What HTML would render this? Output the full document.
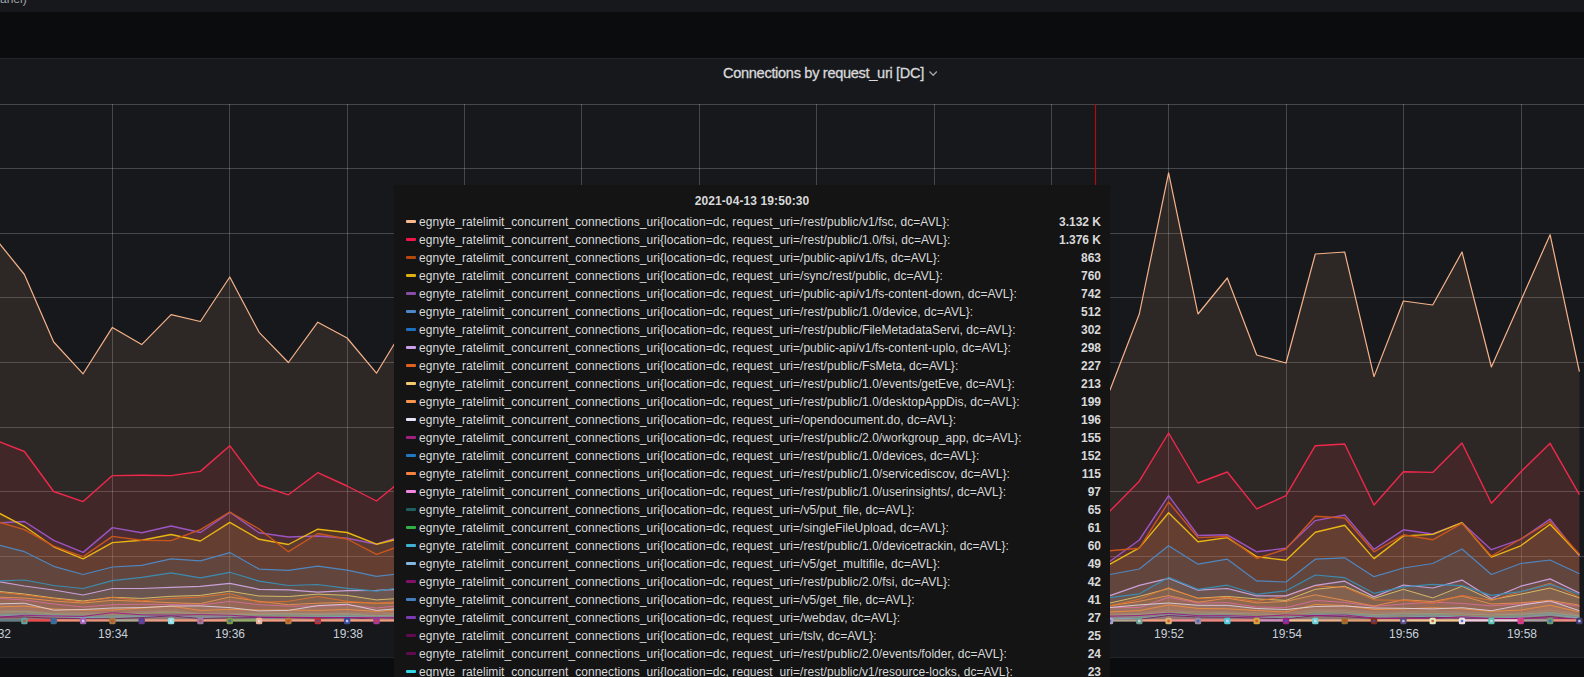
<!DOCTYPE html>
<html><head><meta charset="utf-8"><style>
*{margin:0;padding:0;box-sizing:border-box}
html,body{width:1584px;height:677px;overflow:hidden;background:#0b0c0e;font-family:"Liberation Sans",sans-serif}
.top{position:absolute;left:0;top:0;width:1584px;height:12px;background:#17181c;overflow:hidden}
.top span{position:absolute;left:0px;top:-8px;font-size:12px;color:#9fa3a8}
.panel{position:absolute;left:0;top:58px;width:1584px;height:600px;background:#17181c;border-top:1px solid #222428;border-bottom:1px solid #222428}
.title{position:absolute;left:0;top:64px;width:1584px;text-align:center;font-size:14px;color:#d8d9da;padding-left:60px}
.title span{position:absolute;left:723px;top:1px}
.chev{position:absolute}
.tip{position:absolute;left:394px;top:185px;width:716px;height:500px;background:#141414;border-radius:3px}
.hd{position:absolute;left:0;top:193px;width:100%;text-align:center;font-weight:bold;font-size:12px;color:#d8d9da}
.r{position:absolute;left:0;height:18px;width:716px;font-size:12px;color:#d8d9da;white-space:nowrap}
.r i{position:absolute;left:12px;top:8px;width:10px;height:3px;border-radius:1px}
.r .l{position:absolute;left:25px;top:3px;letter-spacing:0.05px}
.r b{position:absolute;right:9px;top:3px;font-weight:bold}
</style></head><body>
<div class="top"><span>anel)</span></div>
<div class="panel"></div>
<div class="title" style="padding:0"><span style="position:absolute;left:723px;top:1px;font-size:14.6px;letter-spacing:-0.32px;-webkit-text-stroke:0.3px #d8d9da">Connections by request_uri [DC]</span></div>
<svg class="chev" width="10" height="8" style="left:928px;top:70px"><path d="M1.5 1.5 L5.2 5.3 L8.8 1.5" fill="none" stroke="#9fa3a8" stroke-width="1.3"/></svg>
<svg width="1584" height="677" style="position:absolute;left:0;top:0">
<defs><clipPath id="pc"><rect x="0" y="104" width="1580" height="518"/></clipPath></defs>
<g stroke="#ffffff" stroke-opacity="0.2" stroke-width="1" shape-rendering="crispEdges"><line x1="0" y1="104.5" x2="1584" y2="104.5"/><line x1="0" y1="168.5" x2="1584" y2="168.5"/><line x1="0" y1="233.5" x2="1584" y2="233.5"/><line x1="0" y1="297.5" x2="1584" y2="297.5"/><line x1="0" y1="362.5" x2="1584" y2="362.5"/><line x1="0" y1="427.5" x2="1584" y2="427.5"/><line x1="0" y1="491.5" x2="1584" y2="491.5"/><line x1="0" y1="556.5" x2="1584" y2="556.5"/><line x1="112.5" y1="104" x2="112.5" y2="621"/><line x1="229.5" y1="104" x2="229.5" y2="621"/><line x1="347.5" y1="104" x2="347.5" y2="621"/><line x1="464.5" y1="104" x2="464.5" y2="621"/><line x1="581.5" y1="104" x2="581.5" y2="621"/><line x1="699.5" y1="104" x2="699.5" y2="621"/><line x1="816.5" y1="104" x2="816.5" y2="621"/><line x1="934.5" y1="104" x2="934.5" y2="621"/><line x1="1051.5" y1="104" x2="1051.5" y2="621"/><line x1="1168.5" y1="104" x2="1168.5" y2="621"/><line x1="1286.5" y1="104" x2="1286.5" y2="621"/><line x1="1403.5" y1="104" x2="1403.5" y2="621"/><line x1="1521.5" y1="104" x2="1521.5" y2="621"/></g>
<g clip-path="url(#pc)">
<path d="M-5.0 238.0 L24.4 274.5 L53.7 342.0 L83.1 373.8 L112.4 327.4 L141.7 344.6 L171.1 314.7 L200.4 321.5 L229.8 277.0 L259.1 332.3 L288.4 362.5 L317.8 322.2 L347.1 338.0 L376.5 373.2 L405.8 325.0 L435.1 330.0 L435.1 621.2 L-5.0 621.2 Z" fill="#F4BA74" fill-opacity="0.1" stroke="none"/>
<path d="M1080.6 410.0 L1110.0 390.0 L1139.3 314.0 L1168.6 172.9 L1198.0 314.0 L1227.3 278.0 L1256.7 355.0 L1286.0 363.0 L1315.3 254.0 L1344.7 252.0 L1374.0 376.6 L1403.4 301.0 L1432.7 305.0 L1462.0 252.0 L1491.4 367.0 L1520.7 301.0 L1550.1 234.7 L1579.4 371.6 L1579.4 621.2 L1080.6 621.2 Z" fill="#F4BA74" fill-opacity="0.1" stroke="none"/>
<path d="M-5.0 440.0 L24.4 451.5 L53.7 491.5 L83.1 501.6 L112.4 475.6 L141.7 475.3 L171.1 475.6 L200.4 471.4 L229.8 445.7 L259.1 485.0 L288.4 494.8 L317.8 472.7 L347.1 486.0 L376.5 501.0 L405.8 477.0 L435.1 480.0 L435.1 621.2 L-5.0 621.2 Z" fill="#FF2C52" fill-opacity="0.1" stroke="none"/>
<path d="M1080.6 520.0 L1110.0 511.0 L1139.3 481.2 L1168.6 433.0 L1198.0 483.0 L1227.3 472.0 L1256.7 508.9 L1286.0 495.7 L1315.3 445.7 L1344.7 444.0 L1374.0 505.0 L1403.4 471.7 L1432.7 472.4 L1462.0 443.0 L1491.4 503.2 L1520.7 472.0 L1550.1 443.3 L1579.4 494.7 L1579.4 621.2 L1080.6 621.2 Z" fill="#FF2C52" fill-opacity="0.1" stroke="none"/>
<path d="M-5.0 521.0 L24.4 529.6 L53.7 546.2 L83.1 556.6 L112.4 536.4 L141.7 540.3 L171.1 540.6 L200.4 529.6 L229.8 512.0 L259.1 529.0 L288.4 551.7 L317.8 533.5 L347.1 539.0 L376.5 554.3 L405.8 544.0 L435.1 545.0 L435.1 621.2 L-5.0 621.2 Z" fill="#C8561C" fill-opacity="0.1" stroke="none"/>
<path d="M1080.6 552.0 L1110.0 550.7 L1139.3 548.2 L1168.6 502.0 L1198.0 537.6 L1227.3 536.5 L1256.7 558.5 L1286.0 549.0 L1315.3 516.3 L1344.7 518.0 L1374.0 551.8 L1403.4 534.8 L1432.7 539.8 L1462.0 523.4 L1491.4 556.0 L1520.7 539.0 L1550.1 521.7 L1579.4 554.3 L1579.4 621.2 L1080.6 621.2 Z" fill="#C8561C" fill-opacity="0.1" stroke="none"/>
<path d="M-5.0 511.0 L24.4 526.3 L53.7 546.8 L83.1 558.9 L112.4 542.6 L141.7 540.3 L171.1 534.5 L200.4 541.0 L229.8 522.4 L259.1 539.3 L288.4 544.5 L317.8 529.2 L347.1 532.5 L376.5 544.2 L405.8 537.0 L435.1 540.0 L435.1 621.2 L-5.0 621.2 Z" fill="#E8C412" fill-opacity="0.1" stroke="none"/>
<path d="M1080.6 566.0 L1110.0 564.2 L1139.3 547.9 L1168.6 512.8 L1198.0 541.8 L1227.3 537.6 L1256.7 556.7 L1286.0 560.3 L1315.3 532.3 L1344.7 525.2 L1374.0 558.6 L1403.4 535.9 L1432.7 534.4 L1462.0 522.7 L1491.4 557.1 L1520.7 545.8 L1550.1 524.2 L1579.4 555.0 L1579.4 621.2 L1080.6 621.2 Z" fill="#E8C412" fill-opacity="0.1" stroke="none"/>
<path d="M-5.0 523.0 L24.4 521.5 L53.7 540.3 L83.1 552.4 L112.4 527.6 L141.7 532.8 L171.1 526.0 L200.4 532.5 L229.8 512.3 L259.1 532.8 L288.4 537.0 L317.8 536.0 L347.1 538.3 L376.5 544.2 L405.8 535.0 L435.1 536.0 L435.1 621.2 L-5.0 621.2 Z" fill="#9A5A90" fill-opacity="0.1" stroke="none"/>
<path d="M1080.6 565.0 L1110.0 561.3 L1139.3 540.0 L1168.6 495.7 L1198.0 535.5 L1227.3 534.8 L1256.7 551.8 L1286.0 548.2 L1315.3 520.6 L1344.7 515.0 L1374.0 549.3 L1403.4 529.8 L1432.7 534.0 L1462.0 522.7 L1491.4 549.7 L1520.7 539.4 L1550.1 519.2 L1579.4 556.0 L1579.4 621.2 L1080.6 621.2 Z" fill="#9A5A90" fill-opacity="0.1" stroke="none"/>
<path d="M-5.0 544.0 L24.4 551.7 L53.7 566.3 L83.1 574.5 L112.4 567.0 L141.7 565.4 L171.1 558.9 L200.4 560.8 L229.8 552.6 L259.1 569.1 L288.4 570.4 L317.8 566.2 L347.1 570.1 L376.5 576.3 L405.8 573.0 L435.1 574.0 L435.1 621.2 L-5.0 621.2 Z" fill="#5A8AAF" fill-opacity="0.1" stroke="none"/>
<path d="M1080.6 576.0 L1110.0 574.5 L1139.3 569.0 L1168.6 545.7 L1198.0 564.2 L1227.3 559.2 L1256.7 580.9 L1286.0 582.0 L1315.3 559.2 L1344.7 557.8 L1374.0 576.7 L1403.4 568.0 L1432.7 563.5 L1462.0 549.0 L1491.4 574.5 L1520.7 563.5 L1550.1 560.0 L1579.4 573.8 L1579.4 621.2 L1080.6 621.2 Z" fill="#5A8AAF" fill-opacity="0.1" stroke="none"/>
<path d="M-5.0 581.0 L24.4 580.0 L53.7 585.5 L83.1 588.5 L112.4 580.7 L141.7 577.3 L171.1 572.8 L200.4 577.8 L229.8 572.3 L259.1 581.1 L288.4 585.5 L317.8 584.5 L347.1 588.3 L376.5 591.2 L405.8 587.0 L435.1 588.0 L435.1 621.2 L-5.0 621.2 Z" fill="#4A9098" fill-opacity="0.1" stroke="none"/>
<path d="M1080.6 598.0 L1110.0 597.6 L1139.3 593.8 L1168.6 577.4 L1198.0 589.4 L1227.3 585.2 L1256.7 594.3 L1286.0 590.8 L1315.3 575.0 L1344.7 577.7 L1374.0 593.3 L1403.4 586.8 L1432.7 584.4 L1462.0 585.6 L1491.4 595.4 L1520.7 591.7 L1550.1 584.4 L1579.4 594.2 L1579.4 621.2 L1080.6 621.2 Z" fill="#4A9098" fill-opacity="0.1" stroke="none"/>
<path d="M-5.0 581.0 L24.4 586.0 L53.7 590.0 L83.1 595.0 L112.4 588.5 L141.7 588.5 L171.1 587.4 L200.4 586.4 L229.8 583.3 L259.1 589.3 L288.4 589.8 L317.8 592.2 L347.1 590.7 L376.5 590.3 L405.8 589.0 L435.1 589.0 L435.1 621.2 L-5.0 621.2 Z" fill="#C8A8B8" fill-opacity="0.1" stroke="none"/>
<path d="M1080.6 597.0 L1110.0 595.6 L1139.3 585.4 L1168.6 578.3 L1198.0 590.2 L1227.3 588.5 L1256.7 595.9 L1286.0 595.9 L1315.3 585.3 L1344.7 581.2 L1374.0 596.9 L1403.4 585.0 L1432.7 588.0 L1462.0 580.1 L1491.4 598.5 L1520.7 586.2 L1550.1 578.9 L1579.4 593.0 L1579.4 621.2 L1080.6 621.2 Z" fill="#C8A8B8" fill-opacity="0.1" stroke="none"/>
<path d="M-5.0 592.0 L24.4 595.0 L53.7 598.7 L83.1 602.0 L112.4 597.3 L141.7 600.8 L171.1 598.4 L200.4 597.0 L229.8 593.6 L259.1 602.3 L288.4 601.3 L317.8 596.5 L347.1 601.3 L376.5 603.2 L405.8 601.0 L435.1 601.0 L435.1 621.2 L-5.0 621.2 Z" fill="#E8702A" fill-opacity="0.1" stroke="none"/>
<path d="M1080.6 607.0 L1110.0 605.7 L1139.3 599.1 L1168.6 587.6 L1198.0 598.7 L1227.3 597.3 L1256.7 601.4 L1286.0 595.9 L1315.3 585.8 L1344.7 587.3 L1374.0 599.9 L1403.4 600.3 L1432.7 603.4 L1462.0 595.4 L1491.4 600.3 L1520.7 591.7 L1550.1 583.2 L1579.4 597.3 L1579.4 621.2 L1080.6 621.2 Z" fill="#E8702A" fill-opacity="0.1" stroke="none"/>
<path d="M-5.0 591.0 L24.4 594.0 L53.7 598.0 L83.1 601.0 L112.4 597.3 L141.7 598.4 L171.1 596.3 L200.4 595.4 L229.8 591.2 L259.1 596.0 L288.4 596.5 L317.8 594.1 L347.1 595.4 L376.5 599.9 L405.8 598.0 L435.1 598.0 L435.1 621.2 L-5.0 621.2 Z" fill="#E8C86A" fill-opacity="0.1" stroke="none"/>
<path d="M1080.6 605.0 L1110.0 603.0 L1139.3 596.4 L1168.6 588.5 L1198.0 598.2 L1227.3 596.4 L1256.7 598.9 L1286.0 600.4 L1315.3 589.3 L1344.7 586.3 L1374.0 598.4 L1403.4 589.3 L1432.7 597.9 L1462.0 586.2 L1491.4 599.7 L1520.7 594.2 L1550.1 588.0 L1579.4 597.9 L1579.4 621.2 L1080.6 621.2 Z" fill="#E8C86A" fill-opacity="0.1" stroke="none"/>
<path d="M-5.0 597.0 L24.4 598.0 L53.7 601.0 L83.1 603.0 L112.4 600.3 L141.7 601.3 L171.1 602.7 L200.4 603.7 L229.8 597.0 L259.1 601.3 L288.4 604.7 L317.8 603.2 L347.1 602.3 L376.5 603.2 L405.8 603.0 L435.1 603.0 L435.1 621.2 L-5.0 621.2 Z" fill="#F29050" fill-opacity="0.1" stroke="none"/>
<path d="M1080.6 606.0 L1110.0 605.7 L1139.3 601.3 L1168.6 595.6 L1198.0 602.2 L1227.3 598.2 L1256.7 602.9 L1286.0 601.4 L1315.3 594.8 L1344.7 600.4 L1374.0 606.0 L1403.4 599.7 L1432.7 601.5 L1462.0 596.0 L1491.4 604.0 L1520.7 602.8 L1550.1 600.3 L1579.4 605.2 L1579.4 621.2 L1080.6 621.2 Z" fill="#F29050" fill-opacity="0.1" stroke="none"/>
<path d="M-5.0 604.0 L24.4 603.2 L53.7 610.2 L83.1 609.5 L112.4 608.0 L141.7 607.6 L171.1 606.1 L200.4 605.9 L229.8 607.6 L259.1 610.9 L288.4 610.4 L317.8 605.6 L347.1 604.2 L376.5 610.4 L405.8 608.0 L435.1 608.0 L435.1 621.2 L-5.0 621.2 Z" fill="#E0D8E8" fill-opacity="0.1" stroke="none"/>
<path d="M1080.6 608.0 L1110.0 607.5 L1139.3 604.9 L1168.6 603.0 L1198.0 605.3 L1227.3 605.3 L1256.7 608.5 L1286.0 609.5 L1315.3 606.5 L1344.7 606.0 L1374.0 608.0 L1403.4 608.3 L1432.7 608.9 L1462.0 607.7 L1491.4 610.7 L1520.7 605.2 L1550.1 600.9 L1579.4 610.7 L1579.4 621.2 L1080.6 621.2 Z" fill="#E0D8E8" fill-opacity="0.1" stroke="none"/>
<path d="M-5.0 598.0 L24.4 600.0 L53.7 604.0 L83.1 607.0 L112.4 604.7 L141.7 604.2 L171.1 604.5 L200.4 605.1 L229.8 601.3 L259.1 604.7 L288.4 606.1 L317.8 606.1 L347.1 605.1 L376.5 608.0 L405.8 605.0 L435.1 605.0 L435.1 621.2 L-5.0 621.2 Z" fill="#D86FA0" fill-opacity="0.1" stroke="none"/>
<path d="M1080.6 608.0 L1110.0 607.5 L1139.3 607.5 L1168.6 597.3 L1198.0 603.0 L1227.3 602.6 L1256.7 607.0 L1286.0 607.5 L1315.3 600.4 L1344.7 602.4 L1374.0 606.5 L1403.4 604.0 L1432.7 602.2 L1462.0 603.4 L1491.4 605.8 L1520.7 604.0 L1550.1 601.5 L1579.4 606.4 L1579.4 621.2 L1080.6 621.2 Z" fill="#D86FA0" fill-opacity="0.1" stroke="none"/>
<path d="M-5.0 607.0 L24.4 606.0 L53.7 609.0 L83.1 610.0 L112.4 610.0 L141.7 608.0 L171.1 606.1 L200.4 610.4 L229.8 609.5 L259.1 610.0 L288.4 610.0 L317.8 610.4 L347.1 609.5 L376.5 611.4 L405.8 609.5 L435.1 610.0 L435.1 621.2 L-5.0 621.2 Z" fill="#F09040" fill-opacity="0.1" stroke="none"/>
<path d="M1080.6 612.0 L1110.0 612.0 L1139.3 610.6 L1168.6 604.9 L1198.0 608.4 L1227.3 608.8 L1256.7 610.5 L1286.0 612.0 L1315.3 604.4 L1344.7 605.5 L1374.0 609.5 L1403.4 608.9 L1432.7 607.7 L1462.0 608.9 L1491.4 611.3 L1520.7 610.1 L1550.1 605.2 L1579.4 612.0 L1579.4 621.2 L1080.6 621.2 Z" fill="#F09040" fill-opacity="0.1" stroke="none"/>
<path d="M-5.0 617.5 L24.4 615.3 L53.7 616.0 L83.1 616.4 L112.4 612.7 L141.7 614.8 L171.1 615.2 L200.4 614.6 L229.8 615.2 L259.1 617.0 L288.4 617.5 L317.8 617.6 L347.1 617.5 L376.5 617.6 L405.8 617.5 L435.1 617.5 L435.1 621.2 L-5.0 621.2 Z" fill="#A0107F" fill-opacity="0.1" stroke="none"/>
<path d="M1080.6 616.5 L1110.0 616.2 L1139.3 615.5 L1168.6 613.3 L1198.0 615.7 L1227.3 615.7 L1256.7 616.6 L1286.0 615.0 L1315.3 615.6 L1344.7 615.0 L1374.0 618.0 L1403.4 618.7 L1432.7 618.7 L1462.0 616.8 L1491.4 618.7 L1520.7 618.3 L1550.1 618.0 L1579.4 619.3 L1579.4 621.2 L1080.6 621.2 Z" fill="#A0107F" fill-opacity="0.1" stroke="none"/>
<path d="M-5.0 611.0 L24.4 610.2 L53.7 612.5 L83.1 612.1 L112.4 612.8 L141.7 611.5 L171.1 610.1 L200.4 613.0 L229.8 611.8 L259.1 612.6 L288.4 612.1 L317.8 612.3 L347.1 612.4 L376.5 614.0 L405.8 611.9 L435.1 612.3 L435.1 621.2 L-5.0 621.2 Z" fill="#A08070" fill-opacity="0.1" stroke="none"/>
<path d="M1080.6 614.0 L1110.0 614.5 L1139.3 613.2 L1168.6 610.0 L1198.0 612.7 L1227.3 611.4 L1256.7 613.6 L1286.0 613.4 L1315.3 609.4 L1344.7 609.9 L1374.0 612.2 L1403.4 612.7 L1432.7 611.1 L1462.0 612.3 L1491.4 613.6 L1520.7 612.6 L1550.1 610.4 L1579.4 613.1 L1579.4 621.2 L1080.6 621.2 Z" fill="#A08070" fill-opacity="0.1" stroke="none"/>
<path d="M-5.0 612.0 L24.4 611.8 L53.7 614.0 L83.1 614.1 L112.4 614.0 L141.7 613.4 L171.1 612.2 L200.4 614.1 L229.8 614.5 L259.1 614.6 L288.4 613.8 L317.8 614.6 L347.1 614.0 L376.5 615.6 L405.8 614.4 L435.1 613.9 L435.1 621.2 L-5.0 621.2 Z" fill="#9AA080" fill-opacity="0.1" stroke="none"/>
<path d="M1080.6 616.0 L1110.0 614.6 L1139.3 614.4 L1168.6 612.1 L1198.0 612.9 L1227.3 613.6 L1256.7 613.8 L1286.0 615.5 L1315.3 611.9 L1344.7 612.1 L1374.0 614.6 L1403.4 613.4 L1432.7 613.4 L1462.0 613.9 L1491.4 615.0 L1520.7 614.2 L1550.1 612.4 L1579.4 616.0 L1579.4 621.2 L1080.6 621.2 Z" fill="#9AA080" fill-opacity="0.1" stroke="none"/>
<path d="M-5.0 614.2 L24.4 614.0 L53.7 614.5 L83.1 616.1 L112.4 616.0 L141.7 615.5 L171.1 614.3 L200.4 615.6 L229.8 615.3 L259.1 616.0 L288.4 615.0 L317.8 615.9 L347.1 615.0 L376.5 615.8 L405.8 614.8 L435.1 616.2 L435.1 621.2 L-5.0 621.2 Z" fill="#7A9A8A" fill-opacity="0.1" stroke="none"/>
<path d="M1080.6 616.2 L1110.0 616.3 L1139.3 615.9 L1168.6 613.8 L1198.0 614.3 L1227.3 615.1 L1256.7 616.1 L1286.0 617.4 L1315.3 613.5 L1344.7 614.1 L1374.0 615.1 L1403.4 615.1 L1432.7 614.4 L1462.0 615.8 L1491.4 617.1 L1520.7 615.2 L1550.1 612.8 L1579.4 616.3 L1579.4 621.2 L1080.6 621.2 Z" fill="#7A9A8A" fill-opacity="0.1" stroke="none"/>
<path d="M-5.0 611.3 L24.4 611.2 L53.7 612.9 L83.1 612.9 L112.4 612.5 L141.7 612.1 L171.1 611.1 L200.4 613.6 L229.8 613.7 L259.1 613.6 L288.4 613.3 L317.8 613.6 L347.1 613.3 L376.5 613.2 L405.8 613.6 L435.1 613.7 L435.1 621.2 L-5.0 621.2 Z" fill="#B08878" fill-opacity="0.1" stroke="none"/>
<path d="M1080.6 614.8 L1110.0 614.7 L1139.3 613.4 L1168.6 610.5 L1198.0 611.8 L1227.3 612.9 L1256.7 612.8 L1286.0 613.6 L1315.3 610.0 L1344.7 610.5 L1374.0 612.7 L1403.4 612.0 L1432.7 611.3 L1462.0 612.1 L1491.4 613.3 L1520.7 613.1 L1550.1 610.1 L1579.4 614.8 L1579.4 621.2 L1080.6 621.2 Z" fill="#B08878" fill-opacity="0.1" stroke="none"/>
<path d="M-5.0 614.9 L24.4 613.7 L53.7 615.4 L83.1 616.0 L112.4 616.0 L141.7 614.6 L171.1 614.9 L200.4 617.2 L229.8 615.9 L259.1 616.2 L288.4 615.6 L317.8 615.8 L347.1 615.7 L376.5 616.6 L405.8 616.5 L435.1 615.7 L435.1 621.2 L-5.0 621.2 Z" fill="#8A8A9A" fill-opacity="0.1" stroke="none"/>
<path d="M1080.6 616.5 L1110.0 618.0 L1139.3 616.6 L1168.6 613.1 L1198.0 615.5 L1227.3 614.9 L1256.7 616.5 L1286.0 618.0 L1315.3 614.0 L1344.7 614.3 L1374.0 615.6 L1403.4 615.5 L1432.7 614.6 L1462.0 616.1 L1491.4 617.0 L1520.7 616.7 L1550.1 613.6 L1579.4 616.8 L1579.4 621.2 L1080.6 621.2 Z" fill="#8A8A9A" fill-opacity="0.1" stroke="none"/>
<path d="M-5.0 617.2 L24.4 617.0 L53.7 618.3 L83.1 618.7 L112.4 618.8 L141.7 617.6 L171.1 615.9 L200.4 618.5 L229.8 617.8 L259.1 617.5 L288.4 617.5 L317.8 618.1 L347.1 617.6 L376.5 619.3 L405.8 618.7 L435.1 618.2 L435.1 621.2 L-5.0 621.2 Z" fill="#6D1F62" fill-opacity="0.1" stroke="none"/>
<path d="M1080.6 619.9 L1110.0 620.0 L1139.3 619.3 L1168.6 615.5 L1198.0 617.0 L1227.3 617.2 L1256.7 618.0 L1286.0 618.8 L1315.3 615.6 L1344.7 616.6 L1374.0 618.5 L1403.4 617.7 L1432.7 617.3 L1462.0 618.2 L1491.4 618.2 L1520.7 618.6 L1550.1 616.5 L1579.4 619.7 L1579.4 621.2 L1080.6 621.2 Z" fill="#6D1F62" fill-opacity="0.1" stroke="none"/>
<path d="M-5.0 616.2 L24.4 615.2 L53.7 616.2 L83.1 617.7 L112.4 617.0 L141.7 616.7 L171.1 616.1 L200.4 617.3 L229.8 616.8 L259.1 618.0 L288.4 617.6 L317.8 616.9 L347.1 616.4 L376.5 617.4 L405.8 617.6 L435.1 617.7 L435.1 621.2 L-5.0 621.2 Z" fill="#70B0C0" fill-opacity="0.1" stroke="none"/>
<path d="M1080.6 617.7 L1110.0 618.8 L1139.3 618.3 L1168.6 615.0 L1198.0 616.2 L1227.3 616.7 L1256.7 616.9 L1286.0 617.5 L1315.3 615.2 L1344.7 615.2 L1374.0 617.0 L1403.4 617.4 L1432.7 616.0 L1462.0 617.3 L1491.4 618.4 L1520.7 616.8 L1550.1 614.5 L1579.4 617.9 L1579.4 621.2 L1080.6 621.2 Z" fill="#70B0C0" fill-opacity="0.1" stroke="none"/>
<path d="M-5.0 616.2 L24.4 615.2 L53.7 616.2 L83.1 617.7 L112.4 617.0 L141.7 616.7 L171.1 616.1 L200.4 617.3 L229.8 616.8 L259.1 618.0 L288.4 617.6 L317.8 616.9 L347.1 616.4 L376.5 617.4 L405.8 617.6 L435.1 617.7" fill="none" stroke="#70B0C0" stroke-width="1.0" stroke-opacity="0.85" stroke-linejoin="round"/>
<path d="M1080.6 617.7 L1110.0 618.8 L1139.3 618.3 L1168.6 615.0 L1198.0 616.2 L1227.3 616.7 L1256.7 616.9 L1286.0 617.5 L1315.3 615.2 L1344.7 615.2 L1374.0 617.0 L1403.4 617.4 L1432.7 616.0 L1462.0 617.3 L1491.4 618.4 L1520.7 616.8 L1550.1 614.5 L1579.4 617.9" fill="none" stroke="#70B0C0" stroke-width="1.0" stroke-opacity="0.85" stroke-linejoin="round"/>
<path d="M-5.0 617.2 L24.4 617.0 L53.7 618.3 L83.1 618.7 L112.4 618.8 L141.7 617.6 L171.1 615.9 L200.4 618.5 L229.8 617.8 L259.1 617.5 L288.4 617.5 L317.8 618.1 L347.1 617.6 L376.5 619.3 L405.8 618.7 L435.1 618.2" fill="none" stroke="#6D1F62" stroke-width="1.0" stroke-opacity="0.85" stroke-linejoin="round"/>
<path d="M1080.6 619.9 L1110.0 620.0 L1139.3 619.3 L1168.6 615.5 L1198.0 617.0 L1227.3 617.2 L1256.7 618.0 L1286.0 618.8 L1315.3 615.6 L1344.7 616.6 L1374.0 618.5 L1403.4 617.7 L1432.7 617.3 L1462.0 618.2 L1491.4 618.2 L1520.7 618.6 L1550.1 616.5 L1579.4 619.7" fill="none" stroke="#6D1F62" stroke-width="1.0" stroke-opacity="0.85" stroke-linejoin="round"/>
<path d="M-5.0 614.9 L24.4 613.7 L53.7 615.4 L83.1 616.0 L112.4 616.0 L141.7 614.6 L171.1 614.9 L200.4 617.2 L229.8 615.9 L259.1 616.2 L288.4 615.6 L317.8 615.8 L347.1 615.7 L376.5 616.6 L405.8 616.5 L435.1 615.7" fill="none" stroke="#8A8A9A" stroke-width="1.0" stroke-opacity="0.85" stroke-linejoin="round"/>
<path d="M1080.6 616.5 L1110.0 618.0 L1139.3 616.6 L1168.6 613.1 L1198.0 615.5 L1227.3 614.9 L1256.7 616.5 L1286.0 618.0 L1315.3 614.0 L1344.7 614.3 L1374.0 615.6 L1403.4 615.5 L1432.7 614.6 L1462.0 616.1 L1491.4 617.0 L1520.7 616.7 L1550.1 613.6 L1579.4 616.8" fill="none" stroke="#8A8A9A" stroke-width="1.0" stroke-opacity="0.85" stroke-linejoin="round"/>
<path d="M-5.0 611.3 L24.4 611.2 L53.7 612.9 L83.1 612.9 L112.4 612.5 L141.7 612.1 L171.1 611.1 L200.4 613.6 L229.8 613.7 L259.1 613.6 L288.4 613.3 L317.8 613.6 L347.1 613.3 L376.5 613.2 L405.8 613.6 L435.1 613.7" fill="none" stroke="#B08878" stroke-width="1.0" stroke-opacity="0.85" stroke-linejoin="round"/>
<path d="M1080.6 614.8 L1110.0 614.7 L1139.3 613.4 L1168.6 610.5 L1198.0 611.8 L1227.3 612.9 L1256.7 612.8 L1286.0 613.6 L1315.3 610.0 L1344.7 610.5 L1374.0 612.7 L1403.4 612.0 L1432.7 611.3 L1462.0 612.1 L1491.4 613.3 L1520.7 613.1 L1550.1 610.1 L1579.4 614.8" fill="none" stroke="#B08878" stroke-width="1.0" stroke-opacity="0.85" stroke-linejoin="round"/>
<path d="M-5.0 614.2 L24.4 614.0 L53.7 614.5 L83.1 616.1 L112.4 616.0 L141.7 615.5 L171.1 614.3 L200.4 615.6 L229.8 615.3 L259.1 616.0 L288.4 615.0 L317.8 615.9 L347.1 615.0 L376.5 615.8 L405.8 614.8 L435.1 616.2" fill="none" stroke="#7A9A8A" stroke-width="1.0" stroke-opacity="0.85" stroke-linejoin="round"/>
<path d="M1080.6 616.2 L1110.0 616.3 L1139.3 615.9 L1168.6 613.8 L1198.0 614.3 L1227.3 615.1 L1256.7 616.1 L1286.0 617.4 L1315.3 613.5 L1344.7 614.1 L1374.0 615.1 L1403.4 615.1 L1432.7 614.4 L1462.0 615.8 L1491.4 617.1 L1520.7 615.2 L1550.1 612.8 L1579.4 616.3" fill="none" stroke="#7A9A8A" stroke-width="1.0" stroke-opacity="0.85" stroke-linejoin="round"/>
<path d="M-5.0 612.0 L24.4 611.8 L53.7 614.0 L83.1 614.1 L112.4 614.0 L141.7 613.4 L171.1 612.2 L200.4 614.1 L229.8 614.5 L259.1 614.6 L288.4 613.8 L317.8 614.6 L347.1 614.0 L376.5 615.6 L405.8 614.4 L435.1 613.9" fill="none" stroke="#9AA080" stroke-width="1.0" stroke-opacity="0.85" stroke-linejoin="round"/>
<path d="M1080.6 616.0 L1110.0 614.6 L1139.3 614.4 L1168.6 612.1 L1198.0 612.9 L1227.3 613.6 L1256.7 613.8 L1286.0 615.5 L1315.3 611.9 L1344.7 612.1 L1374.0 614.6 L1403.4 613.4 L1432.7 613.4 L1462.0 613.9 L1491.4 615.0 L1520.7 614.2 L1550.1 612.4 L1579.4 616.0" fill="none" stroke="#9AA080" stroke-width="1.0" stroke-opacity="0.85" stroke-linejoin="round"/>
<path d="M-5.0 611.0 L24.4 610.2 L53.7 612.5 L83.1 612.1 L112.4 612.8 L141.7 611.5 L171.1 610.1 L200.4 613.0 L229.8 611.8 L259.1 612.6 L288.4 612.1 L317.8 612.3 L347.1 612.4 L376.5 614.0 L405.8 611.9 L435.1 612.3" fill="none" stroke="#A08070" stroke-width="1.0" stroke-opacity="0.85" stroke-linejoin="round"/>
<path d="M1080.6 614.0 L1110.0 614.5 L1139.3 613.2 L1168.6 610.0 L1198.0 612.7 L1227.3 611.4 L1256.7 613.6 L1286.0 613.4 L1315.3 609.4 L1344.7 609.9 L1374.0 612.2 L1403.4 612.7 L1432.7 611.1 L1462.0 612.3 L1491.4 613.6 L1520.7 612.6 L1550.1 610.4 L1579.4 613.1" fill="none" stroke="#A08070" stroke-width="1.0" stroke-opacity="0.85" stroke-linejoin="round"/>
<path d="M-5.0 617.5 L24.4 615.3 L53.7 616.0 L83.1 616.4 L112.4 612.7 L141.7 614.8 L171.1 615.2 L200.4 614.6 L229.8 615.2 L259.1 617.0 L288.4 617.5 L317.8 617.6 L347.1 617.5 L376.5 617.6 L405.8 617.5 L435.1 617.5" fill="none" stroke="#A0107F" stroke-width="1.0" stroke-opacity="0.85" stroke-linejoin="round"/>
<path d="M1080.6 616.5 L1110.0 616.2 L1139.3 615.5 L1168.6 613.3 L1198.0 615.7 L1227.3 615.7 L1256.7 616.6 L1286.0 615.0 L1315.3 615.6 L1344.7 615.0 L1374.0 618.0 L1403.4 618.7 L1432.7 618.7 L1462.0 616.8 L1491.4 618.7 L1520.7 618.3 L1550.1 618.0 L1579.4 619.3" fill="none" stroke="#A0107F" stroke-width="1.0" stroke-opacity="0.85" stroke-linejoin="round"/>
<path d="M-5.0 607.0 L24.4 606.0 L53.7 609.0 L83.1 610.0 L112.4 610.0 L141.7 608.0 L171.1 606.1 L200.4 610.4 L229.8 609.5 L259.1 610.0 L288.4 610.0 L317.8 610.4 L347.1 609.5 L376.5 611.4 L405.8 609.5 L435.1 610.0" fill="none" stroke="#F09040" stroke-width="1.0" stroke-opacity="0.85" stroke-linejoin="round"/>
<path d="M1080.6 612.0 L1110.0 612.0 L1139.3 610.6 L1168.6 604.9 L1198.0 608.4 L1227.3 608.8 L1256.7 610.5 L1286.0 612.0 L1315.3 604.4 L1344.7 605.5 L1374.0 609.5 L1403.4 608.9 L1432.7 607.7 L1462.0 608.9 L1491.4 611.3 L1520.7 610.1 L1550.1 605.2 L1579.4 612.0" fill="none" stroke="#F09040" stroke-width="1.0" stroke-opacity="0.85" stroke-linejoin="round"/>
<path d="M-5.0 598.0 L24.4 600.0 L53.7 604.0 L83.1 607.0 L112.4 604.7 L141.7 604.2 L171.1 604.5 L200.4 605.1 L229.8 601.3 L259.1 604.7 L288.4 606.1 L317.8 606.1 L347.1 605.1 L376.5 608.0 L405.8 605.0 L435.1 605.0" fill="none" stroke="#D86FA0" stroke-width="1.0" stroke-opacity="0.85" stroke-linejoin="round"/>
<path d="M1080.6 608.0 L1110.0 607.5 L1139.3 607.5 L1168.6 597.3 L1198.0 603.0 L1227.3 602.6 L1256.7 607.0 L1286.0 607.5 L1315.3 600.4 L1344.7 602.4 L1374.0 606.5 L1403.4 604.0 L1432.7 602.2 L1462.0 603.4 L1491.4 605.8 L1520.7 604.0 L1550.1 601.5 L1579.4 606.4" fill="none" stroke="#D86FA0" stroke-width="1.0" stroke-opacity="0.85" stroke-linejoin="round"/>
<path d="M-5.0 604.0 L24.4 603.2 L53.7 610.2 L83.1 609.5 L112.4 608.0 L141.7 607.6 L171.1 606.1 L200.4 605.9 L229.8 607.6 L259.1 610.9 L288.4 610.4 L317.8 605.6 L347.1 604.2 L376.5 610.4 L405.8 608.0 L435.1 608.0" fill="none" stroke="#E0D8E8" stroke-width="1.0" stroke-opacity="0.85" stroke-linejoin="round"/>
<path d="M1080.6 608.0 L1110.0 607.5 L1139.3 604.9 L1168.6 603.0 L1198.0 605.3 L1227.3 605.3 L1256.7 608.5 L1286.0 609.5 L1315.3 606.5 L1344.7 606.0 L1374.0 608.0 L1403.4 608.3 L1432.7 608.9 L1462.0 607.7 L1491.4 610.7 L1520.7 605.2 L1550.1 600.9 L1579.4 610.7" fill="none" stroke="#E0D8E8" stroke-width="1.0" stroke-opacity="0.85" stroke-linejoin="round"/>
<path d="M-5.0 597.0 L24.4 598.0 L53.7 601.0 L83.1 603.0 L112.4 600.3 L141.7 601.3 L171.1 602.7 L200.4 603.7 L229.8 597.0 L259.1 601.3 L288.4 604.7 L317.8 603.2 L347.1 602.3 L376.5 603.2 L405.8 603.0 L435.1 603.0" fill="none" stroke="#F29050" stroke-width="1.0" stroke-opacity="0.85" stroke-linejoin="round"/>
<path d="M1080.6 606.0 L1110.0 605.7 L1139.3 601.3 L1168.6 595.6 L1198.0 602.2 L1227.3 598.2 L1256.7 602.9 L1286.0 601.4 L1315.3 594.8 L1344.7 600.4 L1374.0 606.0 L1403.4 599.7 L1432.7 601.5 L1462.0 596.0 L1491.4 604.0 L1520.7 602.8 L1550.1 600.3 L1579.4 605.2" fill="none" stroke="#F29050" stroke-width="1.0" stroke-opacity="0.85" stroke-linejoin="round"/>
<path d="M-5.0 591.0 L24.4 594.0 L53.7 598.0 L83.1 601.0 L112.4 597.3 L141.7 598.4 L171.1 596.3 L200.4 595.4 L229.8 591.2 L259.1 596.0 L288.4 596.5 L317.8 594.1 L347.1 595.4 L376.5 599.9 L405.8 598.0 L435.1 598.0" fill="none" stroke="#E8C86A" stroke-width="1.0" stroke-opacity="0.85" stroke-linejoin="round"/>
<path d="M1080.6 605.0 L1110.0 603.0 L1139.3 596.4 L1168.6 588.5 L1198.0 598.2 L1227.3 596.4 L1256.7 598.9 L1286.0 600.4 L1315.3 589.3 L1344.7 586.3 L1374.0 598.4 L1403.4 589.3 L1432.7 597.9 L1462.0 586.2 L1491.4 599.7 L1520.7 594.2 L1550.1 588.0 L1579.4 597.9" fill="none" stroke="#E8C86A" stroke-width="1.0" stroke-opacity="0.85" stroke-linejoin="round"/>
<path d="M-5.0 592.0 L24.4 595.0 L53.7 598.7 L83.1 602.0 L112.4 597.3 L141.7 600.8 L171.1 598.4 L200.4 597.0 L229.8 593.6 L259.1 602.3 L288.4 601.3 L317.8 596.5 L347.1 601.3 L376.5 603.2 L405.8 601.0 L435.1 601.0" fill="none" stroke="#E8702A" stroke-width="1.0" stroke-opacity="0.85" stroke-linejoin="round"/>
<path d="M1080.6 607.0 L1110.0 605.7 L1139.3 599.1 L1168.6 587.6 L1198.0 598.7 L1227.3 597.3 L1256.7 601.4 L1286.0 595.9 L1315.3 585.8 L1344.7 587.3 L1374.0 599.9 L1403.4 600.3 L1432.7 603.4 L1462.0 595.4 L1491.4 600.3 L1520.7 591.7 L1550.1 583.2 L1579.4 597.3" fill="none" stroke="#E8702A" stroke-width="1.0" stroke-opacity="0.85" stroke-linejoin="round"/>
<path d="M-5.0 581.0 L24.4 586.0 L53.7 590.0 L83.1 595.0 L112.4 588.5 L141.7 588.5 L171.1 587.4 L200.4 586.4 L229.8 583.3 L259.1 589.3 L288.4 589.8 L317.8 592.2 L347.1 590.7 L376.5 590.3 L405.8 589.0 L435.1 589.0" fill="none" stroke="#C9A0D8" stroke-width="1.2" stroke-opacity="1.00" stroke-linejoin="round"/>
<path d="M1080.6 597.0 L1110.0 595.6 L1139.3 585.4 L1168.6 578.3 L1198.0 590.2 L1227.3 588.5 L1256.7 595.9 L1286.0 595.9 L1315.3 585.3 L1344.7 581.2 L1374.0 596.9 L1403.4 585.0 L1432.7 588.0 L1462.0 580.1 L1491.4 598.5 L1520.7 586.2 L1550.1 578.9 L1579.4 593.0" fill="none" stroke="#C9A0D8" stroke-width="1.2" stroke-opacity="1.00" stroke-linejoin="round"/>
<path d="M-5.0 581.0 L24.4 580.0 L53.7 585.5 L83.1 588.5 L112.4 580.7 L141.7 577.3 L171.1 572.8 L200.4 577.8 L229.8 572.3 L259.1 581.1 L288.4 585.5 L317.8 584.5 L347.1 588.3 L376.5 591.2 L405.8 587.0 L435.1 588.0" fill="none" stroke="#3D8BB0" stroke-width="1.2" stroke-opacity="1.00" stroke-linejoin="round"/>
<path d="M1080.6 598.0 L1110.0 597.6 L1139.3 593.8 L1168.6 577.4 L1198.0 589.4 L1227.3 585.2 L1256.7 594.3 L1286.0 590.8 L1315.3 575.0 L1344.7 577.7 L1374.0 593.3 L1403.4 586.8 L1432.7 584.4 L1462.0 585.6 L1491.4 595.4 L1520.7 591.7 L1550.1 584.4 L1579.4 594.2" fill="none" stroke="#3D8BB0" stroke-width="1.2" stroke-opacity="1.00" stroke-linejoin="round"/>
<path d="M-5.0 544.0 L24.4 551.7 L53.7 566.3 L83.1 574.5 L112.4 567.0 L141.7 565.4 L171.1 558.9 L200.4 560.8 L229.8 552.6 L259.1 569.1 L288.4 570.4 L317.8 566.2 L347.1 570.1 L376.5 576.3 L405.8 573.0 L435.1 574.0" fill="none" stroke="#4F86C0" stroke-width="1.2" stroke-opacity="1.00" stroke-linejoin="round"/>
<path d="M1080.6 576.0 L1110.0 574.5 L1139.3 569.0 L1168.6 545.7 L1198.0 564.2 L1227.3 559.2 L1256.7 580.9 L1286.0 582.0 L1315.3 559.2 L1344.7 557.8 L1374.0 576.7 L1403.4 568.0 L1432.7 563.5 L1462.0 549.0 L1491.4 574.5 L1520.7 563.5 L1550.1 560.0 L1579.4 573.8" fill="none" stroke="#4F86C0" stroke-width="1.2" stroke-opacity="1.00" stroke-linejoin="round"/>
<path d="M-5.0 523.0 L24.4 521.5 L53.7 540.3 L83.1 552.4 L112.4 527.6 L141.7 532.8 L171.1 526.0 L200.4 532.5 L229.8 512.3 L259.1 532.8 L288.4 537.0 L317.8 536.0 L347.1 538.3 L376.5 544.2 L405.8 535.0 L435.1 536.0" fill="none" stroke="#9B55C0" stroke-width="1.4" stroke-opacity="1.00" stroke-linejoin="round"/>
<path d="M1080.6 565.0 L1110.0 561.3 L1139.3 540.0 L1168.6 495.7 L1198.0 535.5 L1227.3 534.8 L1256.7 551.8 L1286.0 548.2 L1315.3 520.6 L1344.7 515.0 L1374.0 549.3 L1403.4 529.8 L1432.7 534.0 L1462.0 522.7 L1491.4 549.7 L1520.7 539.4 L1550.1 519.2 L1579.4 556.0" fill="none" stroke="#9B55C0" stroke-width="1.4" stroke-opacity="1.00" stroke-linejoin="round"/>
<path d="M-5.0 511.0 L24.4 526.3 L53.7 546.8 L83.1 558.9 L112.4 542.6 L141.7 540.3 L171.1 534.5 L200.4 541.0 L229.8 522.4 L259.1 539.3 L288.4 544.5 L317.8 529.2 L347.1 532.5 L376.5 544.2 L405.8 537.0 L435.1 540.0" fill="none" stroke="#E8B512" stroke-width="1.4" stroke-opacity="1.00" stroke-linejoin="round"/>
<path d="M1080.6 566.0 L1110.0 564.2 L1139.3 547.9 L1168.6 512.8 L1198.0 541.8 L1227.3 537.6 L1256.7 556.7 L1286.0 560.3 L1315.3 532.3 L1344.7 525.2 L1374.0 558.6 L1403.4 535.9 L1432.7 534.4 L1462.0 522.7 L1491.4 557.1 L1520.7 545.8 L1550.1 524.2 L1579.4 555.0" fill="none" stroke="#E8B512" stroke-width="1.4" stroke-opacity="1.00" stroke-linejoin="round"/>
<path d="M-5.0 521.0 L24.4 529.6 L53.7 546.2 L83.1 556.6 L112.4 536.4 L141.7 540.3 L171.1 540.6 L200.4 529.6 L229.8 512.0 L259.1 529.0 L288.4 551.7 L317.8 533.5 L347.1 539.0 L376.5 554.3 L405.8 544.0 L435.1 545.0" fill="none" stroke="#C8561C" stroke-width="1.4" stroke-opacity="1.00" stroke-linejoin="round"/>
<path d="M1080.6 552.0 L1110.0 550.7 L1139.3 548.2 L1168.6 502.0 L1198.0 537.6 L1227.3 536.5 L1256.7 558.5 L1286.0 549.0 L1315.3 516.3 L1344.7 518.0 L1374.0 551.8 L1403.4 534.8 L1432.7 539.8 L1462.0 523.4 L1491.4 556.0 L1520.7 539.0 L1550.1 521.7 L1579.4 554.3" fill="none" stroke="#C8561C" stroke-width="1.4" stroke-opacity="1.00" stroke-linejoin="round"/>
<path d="M-5.0 440.0 L24.4 451.5 L53.7 491.5 L83.1 501.6 L112.4 475.6 L141.7 475.3 L171.1 475.6 L200.4 471.4 L229.8 445.7 L259.1 485.0 L288.4 494.8 L317.8 472.7 L347.1 486.0 L376.5 501.0 L405.8 477.0 L435.1 480.0" fill="none" stroke="#F0284C" stroke-width="1.4" stroke-opacity="1.00" stroke-linejoin="round"/>
<path d="M1080.6 520.0 L1110.0 511.0 L1139.3 481.2 L1168.6 433.0 L1198.0 483.0 L1227.3 472.0 L1256.7 508.9 L1286.0 495.7 L1315.3 445.7 L1344.7 444.0 L1374.0 505.0 L1403.4 471.7 L1432.7 472.4 L1462.0 443.0 L1491.4 503.2 L1520.7 472.0 L1550.1 443.3 L1579.4 494.7" fill="none" stroke="#F0284C" stroke-width="1.4" stroke-opacity="1.00" stroke-linejoin="round"/>
<path d="M-5.0 238.0 L24.4 274.5 L53.7 342.0 L83.1 373.8 L112.4 327.4 L141.7 344.6 L171.1 314.7 L200.4 321.5 L229.8 277.0 L259.1 332.3 L288.4 362.5 L317.8 322.2 L347.1 338.0 L376.5 373.2 L405.8 325.0 L435.1 330.0" fill="none" stroke="#F5B28A" stroke-width="1.2" stroke-opacity="1.00" stroke-linejoin="round"/>
<path d="M1080.6 410.0 L1110.0 390.0 L1139.3 314.0 L1168.6 172.9 L1198.0 314.0 L1227.3 278.0 L1256.7 355.0 L1286.0 363.0 L1315.3 254.0 L1344.7 252.0 L1374.0 376.6 L1403.4 301.0 L1432.7 305.0 L1462.0 252.0 L1491.4 367.0 L1520.7 301.0 L1550.1 234.7 L1579.4 371.6" fill="none" stroke="#F5B28A" stroke-width="1.2" stroke-opacity="1.00" stroke-linejoin="round"/>
</g>
<line x1="0.0" y1="620.4" x2="24.4" y2="620.4" stroke="#5A8088" stroke-width="2.2"/>
<line x1="24.4" y1="620.4" x2="53.7" y2="620.4" stroke="#F04848" stroke-width="2.2"/>
<line x1="53.7" y1="620.4" x2="83.1" y2="620.4" stroke="#F09070" stroke-width="2.2"/>
<line x1="83.1" y1="620.4" x2="112.4" y2="620.4" stroke="#E89478" stroke-width="2.2"/>
<line x1="112.4" y1="620.4" x2="141.7" y2="620.4" stroke="#A8A890" stroke-width="2.2"/>
<line x1="141.7" y1="620.4" x2="171.1" y2="620.4" stroke="#E8A084" stroke-width="2.2"/>
<line x1="171.1" y1="620.4" x2="200.4" y2="620.4" stroke="#F0A080" stroke-width="2.2"/>
<line x1="200.4" y1="620.4" x2="229.8" y2="620.4" stroke="#F0A080" stroke-width="2.2"/>
<line x1="229.8" y1="620.4" x2="259.1" y2="620.4" stroke="#90B068" stroke-width="2.2"/>
<line x1="259.1" y1="620.4" x2="288.4" y2="620.4" stroke="#F0A080" stroke-width="2.2"/>
<line x1="288.4" y1="620.4" x2="317.8" y2="620.4" stroke="#F0A080" stroke-width="2.2"/>
<line x1="317.8" y1="620.4" x2="347.1" y2="620.4" stroke="#F09A80" stroke-width="2.2"/>
<line x1="347.1" y1="620.4" x2="376.5" y2="620.4" stroke="#F0A080" stroke-width="2.2"/>
<line x1="376.5" y1="620.4" x2="405.8" y2="620.4" stroke="#F0A080" stroke-width="2.2"/>
<line x1="405.8" y1="620.4" x2="435.1" y2="620.4" stroke="#F0A080" stroke-width="2.2"/>
<line x1="1080.6" y1="620.4" x2="1110.0" y2="620.4" stroke="#B0A890" stroke-width="2.2"/>
<line x1="1110.0" y1="620.4" x2="1139.3" y2="620.4" stroke="#B0A890" stroke-width="2.2"/>
<line x1="1139.3" y1="620.4" x2="1168.6" y2="620.4" stroke="#F0A080" stroke-width="2.2"/>
<line x1="1168.6" y1="620.4" x2="1198.0" y2="620.4" stroke="#F09090" stroke-width="2.2"/>
<line x1="1198.0" y1="620.4" x2="1227.3" y2="620.4" stroke="#F08880" stroke-width="2.2"/>
<line x1="1227.3" y1="620.4" x2="1256.7" y2="620.4" stroke="#F09080" stroke-width="2.2"/>
<line x1="1256.7" y1="620.4" x2="1286.0" y2="620.4" stroke="#D090C0" stroke-width="2.2"/>
<line x1="1286.0" y1="620.4" x2="1315.3" y2="620.4" stroke="#F0C090" stroke-width="2.2"/>
<line x1="1315.3" y1="620.4" x2="1344.7" y2="620.4" stroke="#E8B088" stroke-width="2.2"/>
<line x1="1344.7" y1="620.4" x2="1374.0" y2="620.4" stroke="#E0A070" stroke-width="2.2"/>
<line x1="1374.0" y1="620.4" x2="1403.4" y2="620.4" stroke="#E8B080" stroke-width="2.2"/>
<line x1="1403.4" y1="620.4" x2="1432.7" y2="620.4" stroke="#F0C890" stroke-width="2.2"/>
<line x1="1432.7" y1="620.4" x2="1462.0" y2="620.4" stroke="#F0C890" stroke-width="2.2"/>
<line x1="1462.0" y1="620.4" x2="1491.4" y2="620.4" stroke="#F0D0E0" stroke-width="2.2"/>
<line x1="1491.4" y1="620.4" x2="1520.7" y2="620.4" stroke="#F0D0E0" stroke-width="2.2"/>
<line x1="1520.7" y1="620.4" x2="1550.1" y2="620.4" stroke="#A8A0A0" stroke-width="2.2"/>
<line x1="1550.1" y1="620.4" x2="1579.4" y2="620.4" stroke="#F09080" stroke-width="2.2"/>
<rect x="21.2" y="617.8" width="6.4" height="6.4" rx="1.5" fill="#5DA5A0"/><rect x="23.2" y="619.8" width="2.4" height="2.4" fill="#E04020" fill-opacity="0.8"/>
<rect x="50.5" y="617.8" width="6.4" height="6.4" rx="1.5" fill="#3F6E8C"/><rect x="52.5" y="619.8" width="2.4" height="2.4" fill="#3060D0" fill-opacity="0.8"/>
<rect x="79.9" y="617.8" width="6.4" height="6.4" rx="1.5" fill="#A05FB0"/><rect x="81.9" y="619.8" width="2.4" height="2.4" fill="#E0E0FF" fill-opacity="0.8"/>
<rect x="109.2" y="617.8" width="6.4" height="6.4" rx="1.5" fill="#A07A40"/><rect x="111.2" y="619.8" width="2.4" height="2.4" fill="#E04020" fill-opacity="0.8"/>
<rect x="138.5" y="617.8" width="6.4" height="6.4" rx="1.5" fill="#6A3A8A"/><rect x="140.5" y="619.8" width="2.4" height="2.4" fill="#3060D0" fill-opacity="0.8"/>
<rect x="167.9" y="617.8" width="6.4" height="6.4" rx="1.5" fill="#8EE0E0"/><rect x="169.9" y="619.8" width="2.4" height="2.4" fill="#E0E0FF" fill-opacity="0.8"/>
<rect x="197.2" y="617.8" width="6.4" height="6.4" rx="1.5" fill="#9A7AAA"/><rect x="199.2" y="619.8" width="2.4" height="2.4" fill="#E04020" fill-opacity="0.8"/>
<rect x="226.6" y="617.8" width="6.4" height="6.4" rx="1.5" fill="#7A9A40"/><rect x="228.6" y="619.8" width="2.4" height="2.4" fill="#3060D0" fill-opacity="0.8"/>
<rect x="255.9" y="617.8" width="6.4" height="6.4" rx="1.5" fill="#E8B090"/><rect x="257.9" y="619.8" width="2.4" height="2.4" fill="#E0E0FF" fill-opacity="0.8"/>
<rect x="285.2" y="617.8" width="6.4" height="6.4" rx="1.5" fill="#B07A3A"/><rect x="287.2" y="619.8" width="2.4" height="2.4" fill="#E04020" fill-opacity="0.8"/>
<rect x="314.6" y="617.8" width="6.4" height="6.4" rx="1.5" fill="#C03030"/><rect x="316.6" y="619.8" width="2.4" height="2.4" fill="#3060D0" fill-opacity="0.8"/>
<rect x="343.9" y="617.8" width="6.4" height="6.4" rx="1.5" fill="#3A4A9A"/><rect x="345.9" y="619.8" width="2.4" height="2.4" fill="#E0E0FF" fill-opacity="0.8"/>
<rect x="373.3" y="617.8" width="6.4" height="6.4" rx="1.5" fill="#9A3A9A"/><rect x="375.3" y="619.8" width="2.4" height="2.4" fill="#E04020" fill-opacity="0.8"/>
<rect x="402.6" y="617.8" width="6.4" height="6.4" rx="1.5" fill="#7A9A40"/><rect x="404.6" y="619.8" width="2.4" height="2.4" fill="#3060D0" fill-opacity="0.8"/>
<rect x="431.9" y="617.8" width="6.4" height="6.4" rx="1.5" fill="#E8B090"/><rect x="433.9" y="619.8" width="2.4" height="2.4" fill="#E0E0FF" fill-opacity="0.8"/>
<rect x="1106.8" y="617.8" width="6.4" height="6.4" rx="1.5" fill="#B0A0C8"/><rect x="1108.8" y="619.8" width="2.4" height="2.4" fill="#3060D0" fill-opacity="0.8"/>
<rect x="1136.1" y="617.8" width="6.4" height="6.4" rx="1.5" fill="#6F9F8F"/><rect x="1138.1" y="619.8" width="2.4" height="2.4" fill="#E0E0FF" fill-opacity="0.8"/>
<rect x="1165.4" y="617.8" width="6.4" height="6.4" rx="1.5" fill="#D8B070"/><rect x="1167.4" y="619.8" width="2.4" height="2.4" fill="#E04020" fill-opacity="0.8"/>
<rect x="1194.8" y="617.8" width="6.4" height="6.4" rx="1.5" fill="#9A8AA0"/><rect x="1196.8" y="619.8" width="2.4" height="2.4" fill="#3060D0" fill-opacity="0.8"/>
<rect x="1224.1" y="617.8" width="6.4" height="6.4" rx="1.5" fill="#50C8D8"/><rect x="1226.1" y="619.8" width="2.4" height="2.4" fill="#E0E0FF" fill-opacity="0.8"/>
<rect x="1253.5" y="617.8" width="6.4" height="6.4" rx="1.5" fill="#D0A840"/><rect x="1255.5" y="619.8" width="2.4" height="2.4" fill="#E04020" fill-opacity="0.8"/>
<rect x="1282.8" y="617.8" width="6.4" height="6.4" rx="1.5" fill="#A0208A"/><rect x="1284.8" y="619.8" width="2.4" height="2.4" fill="#3060D0" fill-opacity="0.8"/>
<rect x="1312.1" y="617.8" width="6.4" height="6.4" rx="1.5" fill="#6ED0D0"/><rect x="1314.1" y="619.8" width="2.4" height="2.4" fill="#E0E0FF" fill-opacity="0.8"/>
<rect x="1341.5" y="617.8" width="6.4" height="6.4" rx="1.5" fill="#967330"/><rect x="1343.5" y="619.8" width="2.4" height="2.4" fill="#E04020" fill-opacity="0.8"/>
<rect x="1370.8" y="617.8" width="6.4" height="6.4" rx="1.5" fill="#8A2A1A"/><rect x="1372.8" y="619.8" width="2.4" height="2.4" fill="#3060D0" fill-opacity="0.8"/>
<rect x="1400.2" y="617.8" width="6.4" height="6.4" rx="1.5" fill="#5A4A80"/><rect x="1402.2" y="619.8" width="2.4" height="2.4" fill="#E0E0FF" fill-opacity="0.8"/>
<rect x="1429.5" y="617.8" width="6.4" height="6.4" rx="1.5" fill="#E0EAC0"/><rect x="1431.5" y="619.8" width="2.4" height="2.4" fill="#E04020" fill-opacity="0.8"/>
<rect x="1458.8" y="617.8" width="6.4" height="6.4" rx="1.5" fill="#F0E0E8"/><rect x="1460.8" y="619.8" width="2.4" height="2.4" fill="#3060D0" fill-opacity="0.8"/>
<rect x="1488.2" y="617.8" width="6.4" height="6.4" rx="1.5" fill="#60C0B0"/><rect x="1490.2" y="619.8" width="2.4" height="2.4" fill="#E0E0FF" fill-opacity="0.8"/>
<rect x="1517.5" y="617.8" width="6.4" height="6.4" rx="1.5" fill="#D0409B"/><rect x="1519.5" y="619.8" width="2.4" height="2.4" fill="#E04020" fill-opacity="0.8"/>
<rect x="1546.9" y="617.8" width="6.4" height="6.4" rx="1.5" fill="#6A9A70"/><rect x="1548.9" y="619.8" width="2.4" height="2.4" fill="#3060D0" fill-opacity="0.8"/>
<rect x="1576.2" y="617.8" width="6.4" height="6.4" rx="1.5" fill="#3F3B70"/><rect x="1578.2" y="619.8" width="2.4" height="2.4" fill="#E0E0FF" fill-opacity="0.8"/>
<line x1="1095.5" y1="104" x2="1095.5" y2="621" stroke="#A81010" stroke-width="1.2"/>
<g fill="#c7d0d9" font-family="Liberation Sans, sans-serif" font-size="12" text-anchor="middle"><text x="-4.0" y="638">19:32</text><text x="113.0" y="638">19:34</text><text x="230.0" y="638">19:36</text><text x="348.0" y="638">19:38</text><text x="465.0" y="638">19:40</text><text x="582.0" y="638">19:42</text><text x="700.0" y="638">19:44</text><text x="817.0" y="638">19:46</text><text x="935.0" y="638">19:48</text><text x="1052.0" y="638">19:50</text><text x="1169.0" y="638">19:52</text><text x="1287.0" y="638">19:54</text><text x="1404.0" y="638">19:56</text><text x="1522.0" y="638">19:58</text></g>
</svg>
<div class="tip">
<div class="hd" style="top:9px;letter-spacing:0.1px">2021-04-13 19:50:30</div>
<div class="r" style="top:27px"><i style="background:#F9B98C"></i><span class="l">egnyte_ratelimit_concurrent_connections_uri{location=dc, request_uri=/rest/public/v1/fsc, dc=AVL}:</span><b>3.132 K</b></div>
<div class="r" style="top:45px"><i style="background:#F2154A"></i><span class="l">egnyte_ratelimit_concurrent_connections_uri{location=dc, request_uri=/rest/public/1.0/fsi, dc=AVL}:</span><b>1.376 K</b></div>
<div class="r" style="top:63px"><i style="background:#B3480F"></i><span class="l">egnyte_ratelimit_concurrent_connections_uri{location=dc, request_uri=/public-api/v1/fs, dc=AVL}:</span><b>863</b></div>
<div class="r" style="top:81px"><i style="background:#DDB012"></i><span class="l">egnyte_ratelimit_concurrent_connections_uri{location=dc, request_uri=/sync/rest/public, dc=AVL}:</span><b>760</b></div>
<div class="r" style="top:99px"><i style="background:#8A4AA8"></i><span class="l">egnyte_ratelimit_concurrent_connections_uri{location=dc, request_uri=/public-api/v1/fs-content-down, dc=AVL}:</span><b>742</b></div>
<div class="r" style="top:117px"><i style="background:#4F86C8"></i><span class="l">egnyte_ratelimit_concurrent_connections_uri{location=dc, request_uri=/rest/public/1.0/device, dc=AVL}:</span><b>512</b></div>
<div class="r" style="top:135px"><i style="background:#1F6FC0"></i><span class="l">egnyte_ratelimit_concurrent_connections_uri{location=dc, request_uri=/rest/public/FileMetadataServi, dc=AVL}:</span><b>302</b></div>
<div class="r" style="top:153px"><i style="background:#C9A0E8"></i><span class="l">egnyte_ratelimit_concurrent_connections_uri{location=dc, request_uri=/public-api/v1/fs-content-uplo, dc=AVL}:</span><b>298</b></div>
<div class="r" style="top:171px"><i style="background:#E0601D"></i><span class="l">egnyte_ratelimit_concurrent_connections_uri{location=dc, request_uri=/rest/public/FsMeta, dc=AVL}:</span><b>227</b></div>
<div class="r" style="top:189px"><i style="background:#F2C96D"></i><span class="l">egnyte_ratelimit_concurrent_connections_uri{location=dc, request_uri=/rest/public/1.0/events/getEve, dc=AVL}:</span><b>213</b></div>
<div class="r" style="top:207px"><i style="background:#F9934E"></i><span class="l">egnyte_ratelimit_concurrent_connections_uri{location=dc, request_uri=/rest/public/1.0/desktopAppDis, dc=AVL}:</span><b>199</b></div>
<div class="r" style="top:225px"><i style="background:#E8E4F7"></i><span class="l">egnyte_ratelimit_concurrent_connections_uri{location=dc, request_uri=/opendocument.do, dc=AVL}:</span><b>196</b></div>
<div class="r" style="top:243px"><i style="background:#A0207F"></i><span class="l">egnyte_ratelimit_concurrent_connections_uri{location=dc, request_uri=/rest/public/2.0/workgroup_app, dc=AVL}:</span><b>155</b></div>
<div class="r" style="top:261px"><i style="background:#1F78C1"></i><span class="l">egnyte_ratelimit_concurrent_connections_uri{location=dc, request_uri=/rest/public/1.0/devices, dc=AVL}:</span><b>152</b></div>
<div class="r" style="top:279px"><i style="background:#F58040"></i><span class="l">egnyte_ratelimit_concurrent_connections_uri{location=dc, request_uri=/rest/public/1.0/servicediscov, dc=AVL}:</span><b>115</b></div>
<div class="r" style="top:297px"><i style="background:#F285E0"></i><span class="l">egnyte_ratelimit_concurrent_connections_uri{location=dc, request_uri=/rest/public/1.0/userinsights/, dc=AVL}:</span><b>97</b></div>
<div class="r" style="top:315px"><i style="background:#1F5F60"></i><span class="l">egnyte_ratelimit_concurrent_connections_uri{location=dc, request_uri=/v5/put_file, dc=AVL}:</span><b>65</b></div>
<div class="r" style="top:333px"><i style="background:#30B045"></i><span class="l">egnyte_ratelimit_concurrent_connections_uri{location=dc, request_uri=/singleFileUpload, dc=AVL}:</span><b>61</b></div>
<div class="r" style="top:351px"><i style="background:#40B0D0"></i><span class="l">egnyte_ratelimit_concurrent_connections_uri{location=dc, request_uri=/rest/public/1.0/devicetrackin, dc=AVL}:</span><b>60</b></div>
<div class="r" style="top:369px"><i style="background:#80B8E0"></i><span class="l">egnyte_ratelimit_concurrent_connections_uri{location=dc, request_uri=/v5/get_multifile, dc=AVL}:</span><b>49</b></div>
<div class="r" style="top:387px"><i style="background:#80106A"></i><span class="l">egnyte_ratelimit_concurrent_connections_uri{location=dc, request_uri=/rest/public/2.0/fsi, dc=AVL}:</span><b>42</b></div>
<div class="r" style="top:405px"><i style="background:#447EBC"></i><span class="l">egnyte_ratelimit_concurrent_connections_uri{location=dc, request_uri=/v5/get_file, dc=AVL}:</span><b>41</b></div>
<div class="r" style="top:423px"><i style="background:#7A3AB0"></i><span class="l">egnyte_ratelimit_concurrent_connections_uri{location=dc, request_uri=/webdav, dc=AVL}:</span><b>27</b></div>
<div class="r" style="top:441px"><i style="background:#600A50"></i><span class="l">egnyte_ratelimit_concurrent_connections_uri{location=dc, request_uri=/tslv, dc=AVL}:</span><b>25</b></div>
<div class="r" style="top:459px"><i style="background:#600A50"></i><span class="l">egnyte_ratelimit_concurrent_connections_uri{location=dc, request_uri=/rest/public/2.0/events/folder, dc=AVL}:</span><b>24</b></div>
<div class="r" style="top:477px"><i style="background:#30D8E8"></i><span class="l">egnyte_ratelimit_concurrent_connections_uri{location=dc, request_uri=/rest/public/v1/resource-locks, dc=AVL}:</span><b>23</b></div>
</div>
</body></html>
